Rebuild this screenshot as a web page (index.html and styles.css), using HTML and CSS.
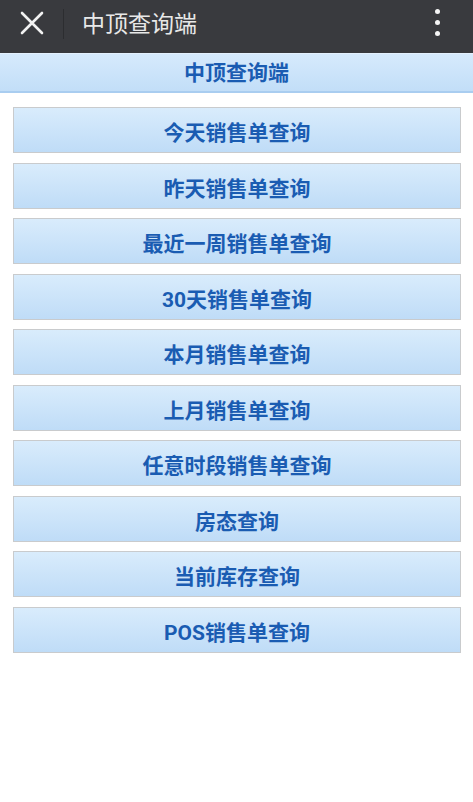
FILE: index.html
```html
<!DOCTYPE html>
<html lang="zh-CN">
<head>
  <meta charset="UTF-8" />
  <meta name="viewport" content="width=device-width, initial-scale=1" />
  <title>中顶查询端</title>
  <link rel="stylesheet" href="styles.css">
</head>
<body>
  <div class="topbar">
    <div class="close">
      <svg width="24" height="24" viewBox="0 0 24 24">
        <path d="M2 2 L22 22 M22 2 L2 22" stroke="#f2f2f2" stroke-width="2.6" stroke-linecap="round" />
      </svg>
    </div>
    <div class="sep"></div>
    <div class="title">中顶查询端</div>
    <div class="more">
      <span></span><span></span><span></span>
    </div>
  </div>

  <div class="subhead">中顶查询端</div>

  <div class="menu">
    <a href="#" class="btn">今天销售单查询</a>
    <a href="#" class="btn">昨天销售单查询</a>
    <a href="#" class="btn">最近一周销售单查询</a>
    <a href="#" class="btn">30天销售单查询</a>
    <a href="#" class="btn">本月销售单查询</a>
    <a href="#" class="btn">上月销售单查询</a>
    <a href="#" class="btn">任意时段销售单查询</a>
    <a href="#" class="btn">房态查询</a>
    <a href="#" class="btn">当前库存查询</a>
    <a href="#" class="btn">POS销售单查询</a>
  </div>
</body>
</html>
```

FILE: styles.css
```css
body {
  margin: 0;
  font-family: Roboto, "Noto Sans CJK SC", sans-serif;
  background-color: #ffffff;
}

.topbar {
  height: 53px;
  background-color: #393a3e;
  display: flex;
  align-items: center;
}

.close {
  width: 63px;
  display: flex;
  justify-content: center;
  padding-bottom: 8px;
}

.sep {
  width: 1px;
  height: 30px;
  background-color: #2c2d30;
  margin-bottom: 6px;
}

.title {
  flex: 1;
  margin-left: 18px;
  font-size: 23px;
  color: #e8e8e8;
  padding-bottom: 10px;
}

.more {
  width: 72px;
  display: flex;
  flex-direction: column;
  align-items: center;
  gap: 6px;
  padding-bottom: 9px;
}

.more span {
  width: 5px;
  height: 5px;
  border-radius: 50%;
  background-color: #f5f5f5;
}

.subhead {
  height: 40px;
  box-sizing: border-box;
  line-height: 39px;
  text-align: center;
  font-size: 21px;
  font-weight: bold;
  color: #1a5cb2;
  background: linear-gradient(#d6eafc, #c2def8);
  border-top: 1px solid #e4f1fd;
  border-bottom: 2px solid #a9cdf0;
}

.menu {
  display: flex;
  flex-direction: column;
  gap: 9.5px;
  padding: 14px 12px 0 13px;
}

.btn {
  height: 46px;
  box-sizing: border-box;
  display: flex;
  align-items: center;
  justify-content: center;
  font-size: 21px;
  font-weight: bold;
  color: #1a5cb2;
  text-decoration: none;
  border: 1px solid #c9cbcd;
  background: linear-gradient(#d9ecfc, #bfdcf7);
  padding-top: 2px;
}
```
